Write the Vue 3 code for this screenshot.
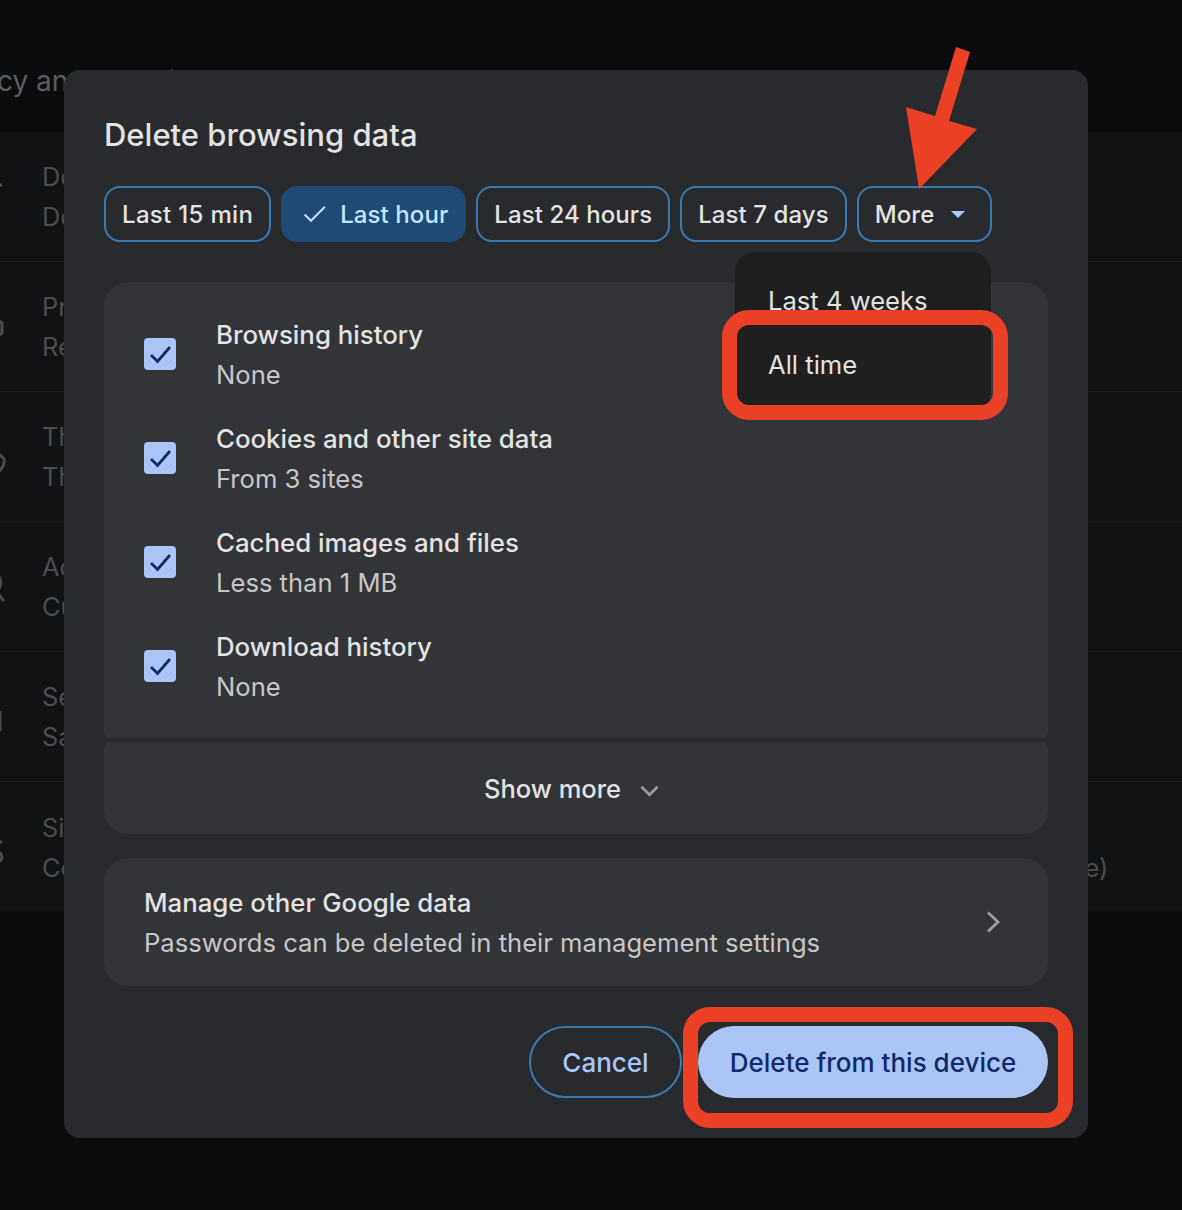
<template>
  <div class="screen">
    <!-- dimmed settings page behind the dialog -->
    <div class="page">
      <h2 class="page-title">Privacy and security</h2>
      <div class="settings-card">
        <div v-for="row in settingsRows" :key="row.title" class="settings-row">
          <svg class="settings-icon" viewBox="0 0 40 40" fill="none" stroke="#4a4b4d" stroke-width="3">
            <path :d="row.icon" />
          </svg>
          <div class="settings-text">
            <div>{{ row.title }}</div>
            <div>{{ row.sub }}</div>
          </div>
        </div>
      </div>
    </div>

    <div class="dialog">
      <h1 class="dialog-title">Delete browsing data</h1>

      <div class="chips">
        <button
          v-for="chip in chips"
          :key="chip.label"
          class="chip"
          :class="{ selected: chip.selected, spaced: chip.spaced }"
        >
          <svg v-if="chip.selected" class="chip-check" viewBox="0 0 26 20" fill="none" stroke="#c2e7ff" stroke-width="2.2">
            <path d="M1.5 10.5 8.5 17.5 24 2" />
          </svg>
          {{ chip.label }}
          <svg v-if="chip.caret" class="chip-caret" viewBox="0 0 14 7"><path d="M0 0h14L7 7z" fill="#a8c7fa" /></svg>
        </button>
      </div>

      <div class="data-list">
        <div v-for="item in dataTypes" :key="item.title" class="data-row">
          <span class="checkbox">
            <svg viewBox="0 0 32 32" fill="none" stroke="#0f2a68" stroke-width="2.8">
              <path d="M7 17 13.5 23.5 26 9" />
            </svg>
          </span>
          <div class="data-text">
            <div class="row-title">{{ item.title }}</div>
            <div class="row-sub">{{ item.sub }}</div>
          </div>
        </div>
      </div>

      <div class="show-more">
        <span>Show more</span>
        <svg class="show-chevron" viewBox="0 0 20 12" fill="none" stroke="#9b9ca0" stroke-width="2.8">
          <path d="M1.5 1.5 10 10 18.5 1.5" />
        </svg>
      </div>

      <div class="manage">
        <div class="manage-text">
          <div class="row-title">Manage other Google data</div>
          <div class="row-sub">Passwords can be deleted in their management settings</div>
        </div>
        <svg class="manage-chevron" viewBox="0 0 14 22" fill="none" stroke="#9b9ca0" stroke-width="2.8">
          <path d="M2 1.5 12 11 2 20.5" />
        </svg>
      </div>

      <div class="actions">
        <button class="btn-cancel">Cancel</button>
        <button class="btn-delete">Delete from this device</button>
      </div>

      <div class="menu">
        <div class="menu-item">Last 4 weeks</div>
        <div class="menu-item">All time</div>
      </div>
    </div>

    <!-- red annotations on top of the screenshot -->
    <svg class="arrow" viewBox="0 0 1182 1210">
      <polygon points="956,47 970,52 949,121 977,129 919,189 906,107 935,116" fill="#ea4026" />
    </svg>
    <div class="mark mark-menu"></div>
    <div class="mark mark-delete"></div>
  </div>
</template>

<script setup>
const chips = [
  { label: 'Last 15 min', spaced: true },
  { label: 'Last hour', selected: true },
  { label: 'Last 24 hours' },
  { label: 'Last 7 days' },
  { label: 'More', caret: true },
]

const dataTypes = [
  { title: 'Browsing history', sub: 'None' },
  { title: 'Cookies and other site data', sub: 'From 3 sites' },
  { title: 'Cached images and files', sub: 'Less than 1 MB' },
  { title: 'Download history', sub: 'None' },
]

// only the right edge of each icon shows past the left side of the window
const settingsRows = [
  {
    title: 'Delete browsing data',
    sub: 'Delete history, cookies, cache, and more',
    icon: 'M30 8h8',
  },
  {
    title: 'Privacy guide',
    sub: 'Review key privacy and security controls',
    icon: 'M30 10 38 16V26L30 32',
  },
  {
    title: 'Third-party cookies',
    sub: 'Third-party cookies are blocked in Incognito mode',
    icon: 'M34 16 40 22C41 28 38 32 33 36',
  },
  {
    title: 'Ad privacy',
    sub: 'Customize the info used by sites to show you ads',
    icon: 'M32 7C38 10 38 20 33 24M30 22 40 34',
  },
  {
    title: 'Security',
    sub: 'Safe Browsing (protection from dangerous sites) and other security settings',
    icon: 'M36 14V34',
  },
  {
    title: 'Site settings',
    sub: 'Controls what information sites can use and show (location, camera, pop-ups, and more)',
    icon: 'M30 14H38M33 24C39 24 40 34 33 34',
  },
]
</script>

<style>
html,
body {
  margin: 0;
  background: #0b0c0e;
}
</style>

<style scoped>
.screen {
  position: relative;
  width: 1182px;
  height: 1210px;
  overflow: hidden;
  background: #0b0c0e;
  font-family: Inter, "Noto Sans", sans-serif;
}

.page {
  padding-top: 62px;
}

.page-title {
  margin: 0 0 32px -70px;
  height: 38px;
  font-size: 28px;
  line-height: 38px;
  font-weight: 400;
  color: #5c5d5f;
  white-space: nowrap;
}

.settings-card {
  width: 1182px;
  background: #111213;
}

.settings-row {
  display: flex;
  align-items: center;
  height: 129px;
  border-bottom: 1px solid #1b1c1d;
  gap: 38px;
  margin-left: -36px;
  white-space: nowrap;
}

.settings-row:last-child {
  height: 127px;
  padding-top: 2px;
  border-bottom: 0;
}

.settings-icon {
  width: 40px;
  height: 40px;
  flex: none;
  overflow: visible;
}

.settings-text {
  font-size: 25.4px;
  line-height: 40px;
  color: #4b4c4e;
}

.dialog {
  position: absolute;
  left: 64px;
  top: 70px;
  width: 1024px;
  height: 1068px;
  box-sizing: border-box;
  padding: 45px 40px 40px;
  border-radius: 16px;
  background: #292a2d;
}

.dialog-title {
  margin: 0 0 31px;
  font-size: 31px;
  line-height: 40px;
  font-weight: 500;
  color: #e3e3e3;
}

.chips {
  display: flex;
  gap: 10px;
  margin-bottom: 40px;
}

.chip {
  display: flex;
  align-items: center;
  justify-content: center;
  height: 56px;
  box-sizing: border-box;
  padding: 0 16px;
  border: 2px solid #3a7ab3;
  border-radius: 16px;
  background: none;
  font: 500 24px Inter, "Noto Sans", sans-serif;
  letter-spacing: 0.08px;
  color: #e3e3e3;
  white-space: nowrap;
}

.chip.spaced {
  letter-spacing: 0.32px;
}

.chip.selected {
  padding-left: 20px;
  border-color: #1f4a75;
  background: #1f4a75;
  color: #c2e7ff;
}

.chip-check {
  width: 24px;
  height: 18px;
  margin-right: 13px;
}

.chip-caret {
  width: 14px;
  height: 7px;
  margin-left: 17px;
  margin-right: 9px;
}

.data-list {
  box-sizing: border-box;
  height: 456px;
  padding: 20px 40px;
  border-radius: 24px 24px 6px 6px;
  background: #333438;
}

.data-row {
  display: flex;
  align-items: center;
  height: 104px;
  gap: 41px;
}

.data-text {
  margin-left: -1px;
  padding-top: 2px;
}

.checkbox {
  width: 32px;
  height: 32px;
  flex: none;
  border-radius: 4px;
  background: #abc5f6;
}

.checkbox svg {
  display: block;
}

.row-title {
  font-size: 25.8px;
  line-height: 40px;
  font-weight: 500;
  color: #e3e3e3;
}

.row-sub {
  font-size: 25.6px;
  line-height: 40px;
  color: #c7c7c7;
}

.show-more {
  display: flex;
  align-items: center;
  justify-content: center;
  gap: 19px;
  height: 92px;
  margin-top: 4px;
  padding-right: 9px;
  border-radius: 6px 6px 24px 24px;
  background: #333438;
  font-size: 25.5px;
  font-weight: 500;
  color: #e3e3e3;
}

.show-chevron {
  width: 19px;
  height: 12px;
  margin-top: 5px;
}

.manage {
  display: flex;
  align-items: center;
  justify-content: space-between;
  box-sizing: border-box;
  height: 128px;
  margin-top: 24px;
  padding: 0 48px 0 40px;
  border-radius: 24px;
  background: #333438;
}

.manage-text {
  padding-top: 2px;
}

.manage-chevron {
  width: 14px;
  height: 22px;
}

.actions {
  display: flex;
  justify-content: flex-end;
  gap: 16px;
  margin-top: 40px;
}

.actions button {
  height: 72px;
  box-sizing: border-box;
  border-radius: 36px;
  font: 500 26px Inter, "Noto Sans", sans-serif;
}

.btn-cancel {
  width: 153px;
  border: 2px solid #3a7ab3;
  background: none;
  color: #a8c7fa;
}

.btn-delete {
  width: 350px;
  border: 0;
  background: #abc5f6;
  color: #0f2a68;
}

.menu {
  position: absolute;
  left: 671px;
  top: 182px;
  width: 256px;
  padding: 17px 0 15px;
  border-radius: 20px;
  background: #1f1f1f;
}

.menu-item {
  height: 64px;
  padding-left: 33px;
  font-size: 25.6px;
  line-height: 64px;
  color: #e3e3e3;
}

.arrow {
  position: absolute;
  left: 0;
  top: 0;
  width: 1182px;
  height: 1210px;
  pointer-events: none;
}

.mark {
  position: absolute;
  box-sizing: border-box;
  border: 15px solid #ea4026;
  border-radius: 27px;
}

.mark-menu {
  left: 722px;
  top: 310px;
  width: 286px;
  height: 110px;
}

.mark-delete {
  left: 683px;
  top: 1007px;
  width: 390px;
  height: 121px;
}
</style>
